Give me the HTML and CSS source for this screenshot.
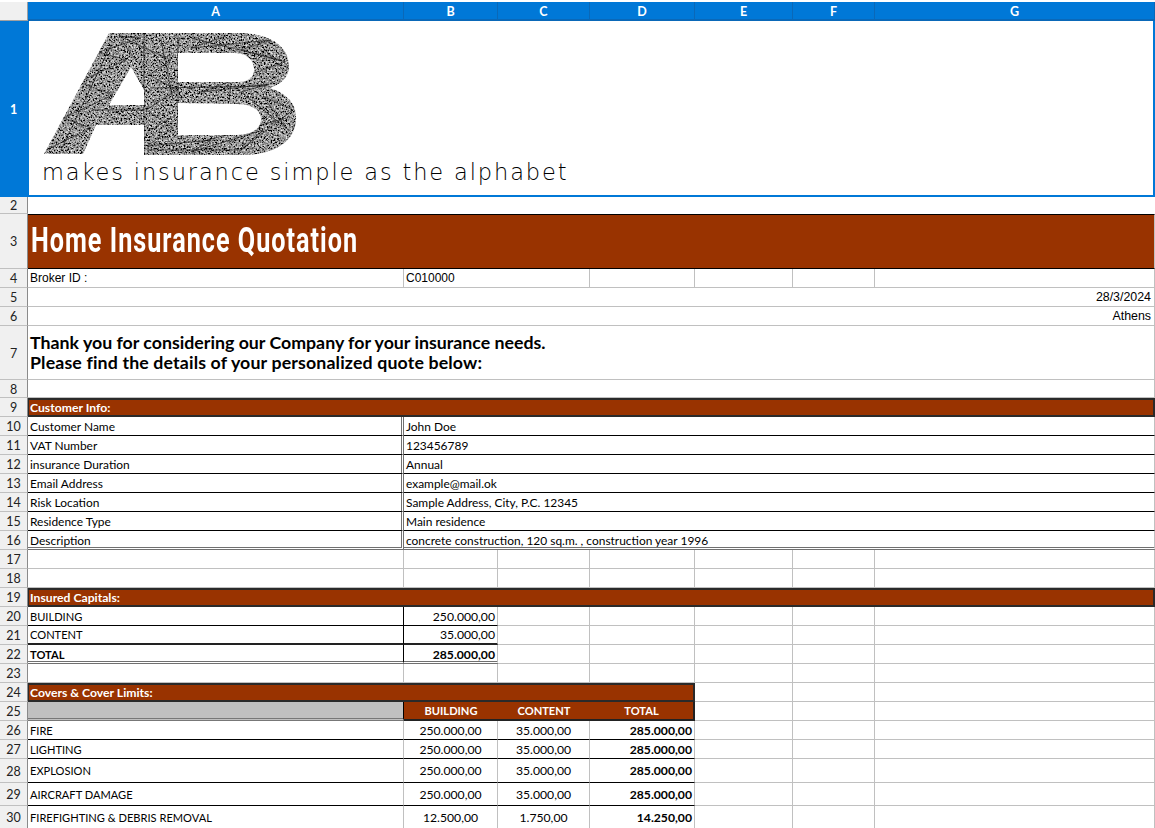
FILE: index.html
```html
<!DOCTYPE html>
<html lang="en">
<head>
<meta charset="utf-8">
<title>Home Insurance Quotation</title>
<link rel="stylesheet" href="styles.css">
</head>
<body>
<main class="sheet">
  <div class="corner"></div>
  <div class="ch">A</div><div class="ch">B</div><div class="ch">C</div><div class="ch">D</div><div class="ch">E</div><div class="ch">F</div><div class="ch">G</div>

  <div class="rh rh-sel">1</div>
  <div class="c span-all logo-cell">
    <svg class="logo" viewBox="40 31 260 126" width="260" height="126" aria-label="AB logo">
      <defs>
        <filter id="scribble" x="0" y="0" width="100%" height="100%">
          <feTurbulence type="fractalNoise" baseFrequency="0.6" numOctaves="3" seed="7" result="n"/>
          <feColorMatrix in="n" type="matrix" values="1.7 0 0 0 -0.55  1.7 0 0 0 -0.55  1.7 0 0 0 -0.55  0 0 0 0 1" result="g"/>
          <feComposite in="g" in2="SourceAlpha" operator="in"/>
          <feGaussianBlur stdDeviation="0.35"/>
        </filter>
        <clipPath id="ab-clip">
          <path clip-rule="evenodd" d="M43 154 L108 33 L143 33 L143 125 L95 125 L82 154 Z M108 105 L130 67 L143 90 L143 105 Z"/>
          <path clip-rule="evenodd" d="M143 33 L240 33 C272 34 289 48 288 68 C287 78 279 85 268 88 C286 93 296 104 295 120 C294 142 272 155 243 155 L143 155 Z M177 53 L177 82 L237 82 C248 82 254 76 253 68 C252 59 245 53 232 53 Z M177 103 L177 135 L235 135 C252 135 260 128 260 119 C260 110 250 104 236 104 Z"/>
        </clipPath>
      </defs>
      <g filter="url(#scribble)">
        <path fill-rule="evenodd" d="M43 154 L108 33 L143 33 L143 125 L95 125 L82 154 Z M108 105 L130 67 L143 90 L143 105 Z"/>
        <path fill-rule="evenodd" d="M143 33 L240 33 C272 34 289 48 288 68 C287 78 279 85 268 88 C286 93 296 104 295 120 C294 142 272 155 243 155 L143 155 Z M177 53 L177 82 L237 82 C248 82 254 76 253 68 C252 59 245 53 232 53 Z M177 103 L177 135 L235 135 C252 135 260 128 260 119 C260 110 250 104 236 104 Z"/>
      </g>
      <g class="logo-lines" clip-path="url(#ab-clip)">
        <path d="M143 33 V155 M177 36 V135 M92 110 H143 M150 88 L265 86 M146 150 L240 150 M60 150 L110 45 M190 38 L280 60 M230 84 L228 100 M150 130 L170 118 M120 40 L135 60 M200 142 L285 118 M160 40 L172 100 M255 40 L282 70"/>
        <path d="M45 150 L90 128 L62 118 L112 95 L78 82 L125 60 L98 52 L140 38 L118 36 L170 60 L148 75 L176 90 L145 110 L172 128 L146 146 L210 140 L190 152 L262 130 L240 150 L292 110 L262 96 L285 128 L240 92 L268 84 L200 92 L284 62 L240 50 L270 40 L190 48 L225 36"/>
      </g>
    </svg>
    <p class="tagline">makes insurance simple as the alphabet</p>
  </div>

  <div class="rh">2</div>
  <div class="span-all blank"></div>

  <div class="rh">3</div>
  <div class="c span-all title-cell"><h1 class="title">Home Insurance Quotation</h1></div>

  <div class="rh">4</div>
  <div class="c arial">Broker ID :</div><div class="c arial span-bc">C010000</div><div class="c"></div><div class="c"></div><div class="c"></div><div class="c"></div>

  <div class="rh">5</div>
  <div class="c span-all arial right meta">28/3/2024</div>

  <div class="rh">6</div>
  <div class="c span-all arial right meta">Athens</div>

  <div class="rh">7</div>
  <div class="c span-all thanks"><p class="thanks-line">Thank you for considering our Company for your insurance needs.</p><p class="thanks-line thanks-wide">Please find the details of your personalized quote below:</p></div>

  <div class="rh">8</div>
  <div class="c span-all"></div>

  <div class="rh">9</div>
  <div class="c span-all band">Customer Info:</div>

  <div class="rh">10</div><div class="c line split info">Customer Name</div><div class="c line span-bg info">John Doe</div>
  <div class="rh">11</div><div class="c line split info">VAT Number</div><div class="c line span-bg info">123456789</div>
  <div class="rh">12</div><div class="c line split info">insurance Duration</div><div class="c line span-bg info">Annual</div>
  <div class="rh">13</div><div class="c line split info">Email Address</div><div class="c line span-bg info">example@mail.ok</div>
  <div class="rh">14</div><div class="c line split info">Risk Location</div><div class="c line span-bg info">Sample Address, City, P.C. 12345</div>
  <div class="rh">15</div><div class="c line split info">Residence Type</div><div class="c line span-bg info">Main residence</div>
  <div class="rh">16</div><div class="c dbl-bottom split info">Description</div><div class="c dbl-bottom span-bg info">concrete construction, 120 sq.m. , construction year 1996</div>

  <div class="rh">17</div><div class="c"></div><div class="c"></div><div class="c"></div><div class="c"></div><div class="c"></div><div class="c"></div><div class="c"></div>
  <div class="rh">18</div><div class="c"></div><div class="c"></div><div class="c"></div><div class="c"></div><div class="c"></div><div class="c"></div><div class="c"></div>

  <div class="rh">19</div>
  <div class="c span-all band">Insured Capitals:</div>

  <div class="rh">20</div><div class="c line ink-r caps">BUILDING</div><div class="c line right">250.000,00</div><div class="c"></div><div class="c"></div><div class="c"></div><div class="c"></div><div class="c"></div>
  <div class="rh">21</div><div class="c thick ink-r caps">CONTENT</div><div class="c thick right">35.000,00</div><div class="c"></div><div class="c"></div><div class="c"></div><div class="c"></div><div class="c"></div>
  <div class="rh">22</div><div class="c dbl-bottom ink-r strong caps">TOTAL</div><div class="c dbl-bottom right strong">285.000,00</div><div class="c"></div><div class="c"></div><div class="c"></div><div class="c"></div><div class="c"></div>
  <div class="rh">23</div><div class="c"></div><div class="c"></div><div class="c"></div><div class="c"></div><div class="c"></div><div class="c"></div><div class="c"></div>

  <div class="rh">24</div>
  <div class="c span-ad band">Covers &amp; Cover Limits:</div><div class="c"></div><div class="c"></div><div class="c"></div>

  <div class="rh">25</div>
  <div class="c grey-cell"></div><div class="c head-cell">BUILDING</div><div class="c head-cell">CONTENT</div><div class="c head-cell head-last">TOTAL</div><div class="c"></div><div class="c"></div><div class="c"></div>

  <div class="rh">26</div><div class="c line caps">FIRE</div><div class="c line mid">250.000,00</div><div class="c line mid">35.000,00</div><div class="c line right strong">285.000,00</div><div class="c"></div><div class="c"></div><div class="c"></div>
  <div class="rh">27</div><div class="c line caps">LIGHTING</div><div class="c line mid">250.000,00</div><div class="c line mid">35.000,00</div><div class="c line right strong">285.000,00</div><div class="c"></div><div class="c"></div><div class="c"></div>
  <div class="rh">28</div><div class="c line caps">EXPLOSION</div><div class="c line mid">250.000,00</div><div class="c line mid">35.000,00</div><div class="c line right strong">285.000,00</div><div class="c"></div><div class="c"></div><div class="c"></div>
  <div class="rh">29</div><div class="c line caps">AIRCRAFT DAMAGE</div><div class="c line mid">250.000,00</div><div class="c line mid">35.000,00</div><div class="c line right strong">285.000,00</div><div class="c"></div><div class="c"></div><div class="c"></div>
  <div class="rh">30</div><div class="c caps">FIREFIGHTING &amp; DEBRIS REMOVAL</div><div class="c mid">12.500,00</div><div class="c mid">1.750,00</div><div class="c right strong">14.250,00</div><div class="c"></div><div class="c"></div><div class="c"></div>
</main>
</body>
</html>
```
FILE: styles.css
```css
* { box-sizing: border-box; }
html, body { margin: 0; height: 828px; overflow: hidden; background: #fff; }
body { padding-top: 2px; }

.sheet {
  display: grid;
  width: 1155px;
  grid-template-columns: 28px 376px 94px 92px 105px 98px 82px 280px;
  grid-template-rows: 19px 176px 17px 55px 19px 19px 19px 54px 18px 19px repeat(7, 19px) 19px 19px 19px 19px 19px 19px 19px 19px 19px 19px 19px 24px 23px 23px;
  font-family: Lato, "Open Sans", sans-serif;
  font-size: 12.2px;
  color: #000;
}

.corner { background: #f0f0f0; border-right: 1px solid #a0a0a0; border-bottom: 1px solid #a0a0a0; }
.ch {
  display: flex; align-items: center; justify-content: center;
  padding-top: 1px;
  background: #0078d7; color: #fff;
  border-right: 1px solid #0a68b8; border-bottom: 2px solid #0a68b8;
  font: 700 12.5px Lato, sans-serif;
}
.rh {
  display: flex; align-items: center; justify-content: center;
  padding-top: 1px;
  background: #f0f0f0; color: #222;
  border-right: 1px solid #8a8a8a; border-bottom: 1px solid #c0c0c0;
  font: 12.5px Lato, sans-serif;
}
.rh-sel { background: #0078d7; color: #fff; font-weight: 700; border-color: #0078d7; }

.c {
  display: flex; align-items: center;
  min-width: 0; padding: 0 2px;
  white-space: nowrap;
  border-right: 1px solid #c0c0c0; border-bottom: 1px solid #c0c0c0;
  background: #fff;
}
.span-all { grid-column: 2 / 9; }
.span-bg { grid-column: 3 / 9; }
.span-bc { grid-column: 3 / 5; }
.span-ad { grid-column: 2 / 6; }
.blank { background: #fff; }

.logo-cell {
  display: block; padding: 10px 0 0 12px;
  border: 2px solid #0078d7; border-left-width: 1px; border-top: 0;
}
.logo { display: block; }
.logo-lines path { fill: none; stroke: #111; stroke-width: 0.8; opacity: 0.8; }
.tagline {
  margin: 0 0 0 1px;
  font: 200 22.5px/30px "DejaVu Sans", sans-serif;
  letter-spacing: 1.87px;
  color: #000;
}

.title-cell { background: #993300; border-top: 1px solid #000; border-bottom: 1px solid #000; padding: 0 0 2px 3px; }
.title {
  margin: 0; color: #fff;
  font: 700 35px Roboto, "Liberation Sans", sans-serif;
  letter-spacing: 1.4px;
  transform: scaleX(0.72);
  transform-origin: left center;
}

.arial { font: 12px "Liberation Sans", Arial, sans-serif; }
.meta { font-size: 12.4px; padding-right: 3px; }
.right { justify-content: flex-end; }
.mid { justify-content: center; }
.strong { font-weight: 700; }
.caps { font-size: 11.1px; }
.info { font-size: 11.95px; padding-top: 1px; }

.thanks {
  display: block;
  padding-top: 6px;
  font: 700 17.75px/20px Lato, sans-serif;
}
.thanks-line { margin: 0; }
.thanks-wide { letter-spacing: 0.14px; }

.band {
  background: #993300; color: #fff; font-weight: 700;
  border: 2px solid #2a2a2a; border-left-width: 1px;
  padding: 0 1px;
}
.line { border-bottom: 1px solid #000; }
.thick { border-bottom: 2px solid #222; }
.split { border-right: 3px double #707070; }
.dbl-bottom { border-bottom: 3px double #707070; padding-top: 2px; }
.ink-r { border-right: 1px solid #000; }

.grey-cell { background: #c0c0c0; border-right: 1px solid #000; border-bottom: 3px double #777; }
.head-cell {
  justify-content: center;
  background: #993300; color: #fff; font-weight: 700; font-size: 11.1px;
  border-right: 0; border-bottom: 2px solid #222;
}
.head-last { border-right: 2px solid #222; }
```
